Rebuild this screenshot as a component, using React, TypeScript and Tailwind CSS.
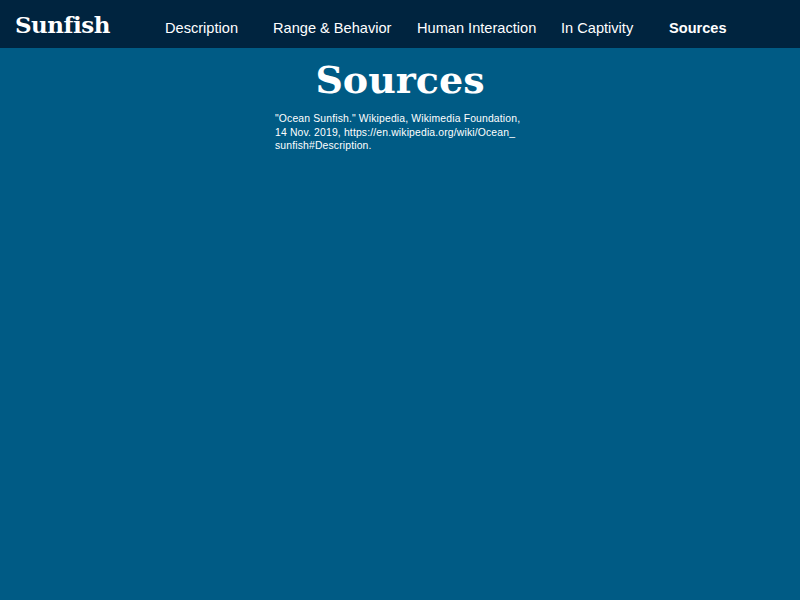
import React from 'react';

const links = [
  { label: 'Description', width: 'w-[108px]' },
  { label: 'Range & Behavior', width: 'w-[144px]' },
  { label: 'Human Interaction', width: 'w-[144px]' },
  { label: 'In Captivity', width: 'w-[108px]' },
  { label: 'Sources', width: 'w-[108px]', active: true },
];

export default function App() {
  return (
    <div className="min-h-screen bg-[#005b85] text-white font-['Liberation_Sans',Arial,sans-serif]">
      <nav className="flex h-12 items-center bg-[#00243f] pl-[15px]">
        <div className="w-[150px] font-['DejaVu_Serif',serif] text-[23px] font-bold leading-none tracking-[-0.5px]">
          Sunfish
        </div>
        <ul className="flex items-center pt-[9px]">
          {links.map((link) => (
            <li
              key={link.label}
              className={`${link.width} text-[14.6px] ${link.active ? 'font-bold' : ''}`}
            >
              {link.label}
            </li>
          ))}
        </ul>
      </nav>

      <main className="flex flex-col items-center">
        <h1 className="mt-[9px] font-['DejaVu_Serif',serif] text-[38px] font-bold leading-[46px]">
          Sources
        </h1>
        <p className="mt-[9px] w-[250px] whitespace-nowrap text-[10.4px] leading-[13.5px] tracking-[0.15px]">
          "Ocean Sunfish." Wikipedia, Wikimedia Foundation,
          <br />
          14 Nov. 2019, https://en.wikipedia.org/wiki/Ocean_
          <br />
          sunfish#Description.
        </p>
      </main>
    </div>
  );
}
